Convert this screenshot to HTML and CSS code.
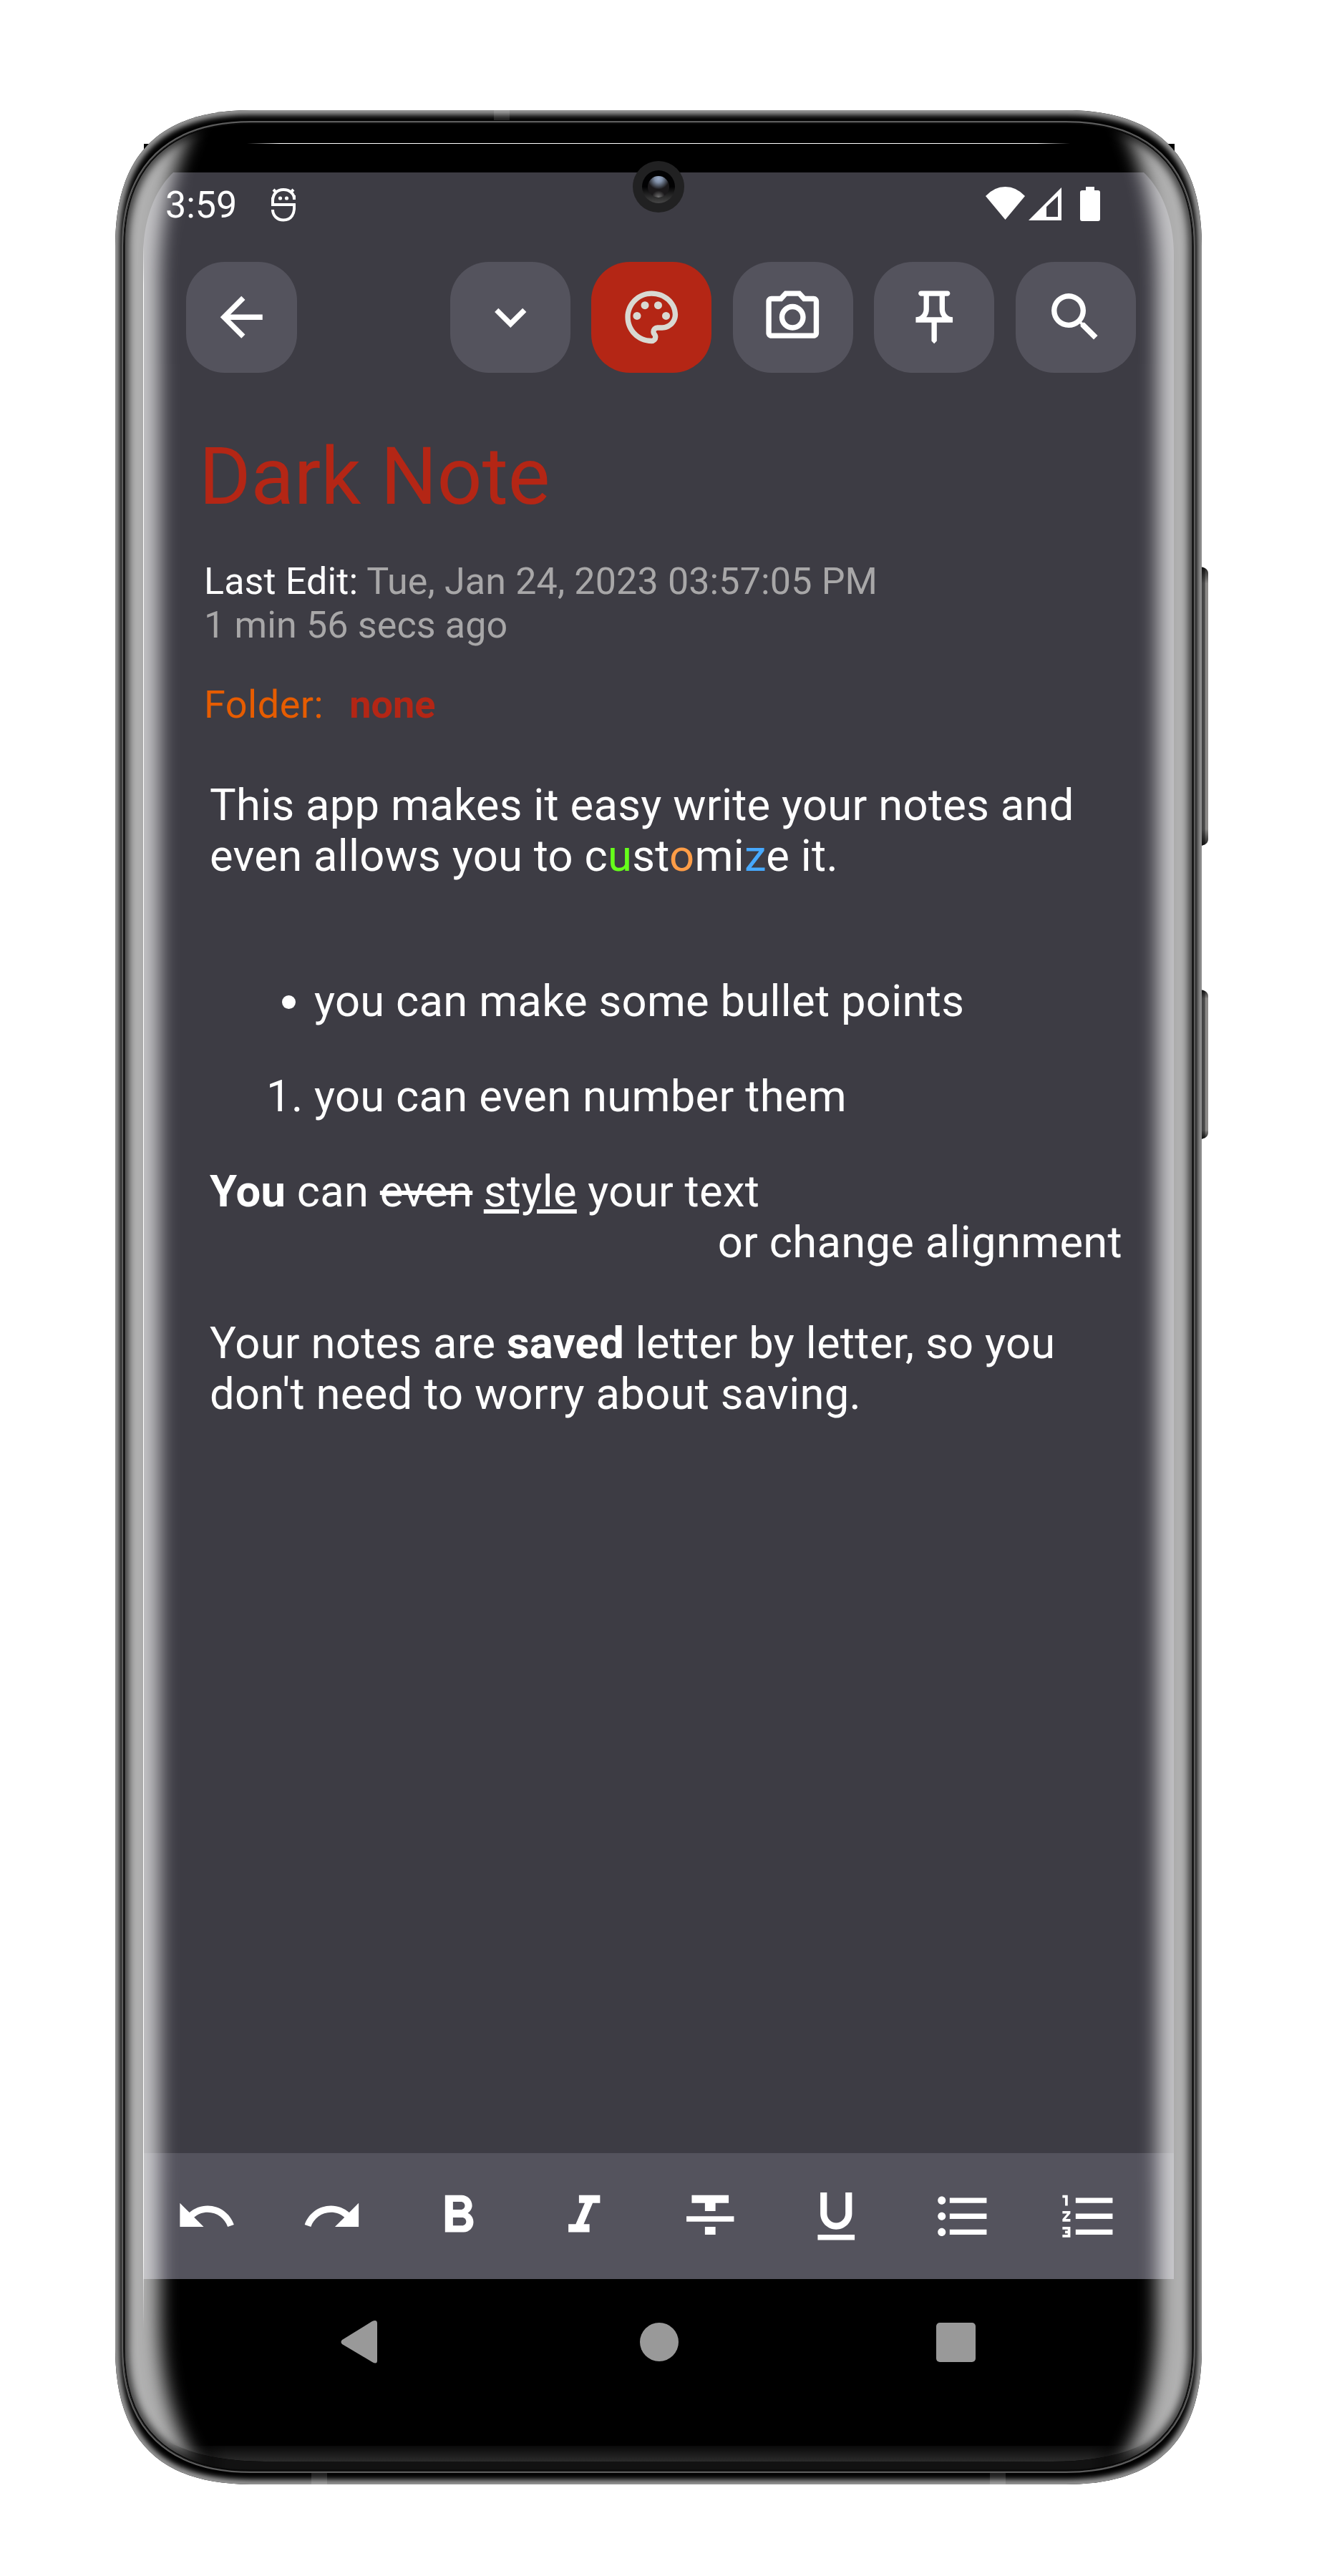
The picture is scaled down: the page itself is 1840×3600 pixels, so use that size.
FILE: index.html
```html
<!DOCTYPE html>
<html lang="en">
<head>
<meta charset="utf-8">
<title>Dark Note</title>
<link rel="stylesheet" href="styles.css">
</head>
<body>
<div class="device">
  <svg class="layer" viewBox="0 0 1840 3600" aria-hidden="true">
    <defs>
      <path id="outer" d="M161 344C161 216 223 154 351 154H1489C1617 154 1679 216 1679 344V3282C1679 3410 1617 3472 1489 3472H351C223 3472 161 3410 161 3282Z"/>
      <path id="inner" d="M173 344C173 232 237 172 351 172H1489C1603 172 1667 232 1667 344V3282C1667 3394 1603 3453 1489 3453H351C237 3453 173 3394 173 3282Z"/>
      <clipPath id="outerClip"><use href="#outer"/></clipPath>
      <linearGradient id="key" x1="0" x2="1" y1="0" y2="0">
        <stop offset="0" stop-color="#3c3c3c"/><stop offset=".6" stop-color="#4a4a4a"/>
        <stop offset=".68" stop-color="#8b8987"/><stop offset="1" stop-color="#8b8987"/>
      </linearGradient>
      <linearGradient id="keyShade" x1="0" x2="0" y1="0" y2="1">
        <stop offset="0" stop-color="#000" stop-opacity=".8"/><stop offset=".06" stop-color="#000" stop-opacity="0"/>
        <stop offset=".94" stop-color="#000" stop-opacity="0"/><stop offset="1" stop-color="#000" stop-opacity=".8"/>
      </linearGradient>
      <filter id="rimBlur" x="-5%" y="-5%" width="110%" height="110%"><feGaussianBlur stdDeviation="3.5"/></filter>
    </defs>
    <path d="M201 201h1440v60H201z"/>
    <path d="M1676 792q12 1 12 10v370q0 9-12 10z" fill="url(#key)"/>
    <path d="M1676 792q12 1 12 10v370q0 9-12 10z" fill="url(#keyShade)"/>
    <path d="M1676 1383q12 1 12 10v189q0 9-12 10z" fill="url(#key)"/>
    <path d="M1676 1383q12 1 12 10v189q0 9-12 10z" fill="url(#keyShade)"/>
    <use href="#outer" fill="#000"/>
    <g clip-path="url(#outerClip)">
      <use href="#outer" fill="none" stroke="#999" stroke-width="13" filter="url(#rimBlur)"/>
      <path d="M690 154h22v14h-22zM435 3455h22v17h-22zM1383 3455h22v17h-22z" fill="#fff" opacity=".12"/>
    </g>
    <use href="#inner" fill="#000" stroke="#5c5c5c" stroke-width="6"/>
    <use href="#inner" fill="#000" stroke="#0a0a0a" stroke-width="1.5"/>
  </svg>

  <main class="screen">
    <header class="status">
      <span class="clock">3:59</span>
      <svg class="debug" viewBox="0 0 34 48" fill="none" stroke="#fff" stroke-width="4">
        <path d="M2 19C2 9 8 3 17 3s15 6 15 13M0 16V24H32C33 37 28 45.500 17 45.500 8 45.500 2 39 2 31M3 3l5 5M31 3l-5 5"/>
        <path d="M2 14V22M32 11V17"/>
        <g fill="#fff" stroke="none"><circle cx="12.500" cy="15" r="2.600"/><circle cx="21.500" cy="15" r="2.600"/></g>
      </svg>
      <svg class="signals" viewBox="0 0 162 50" fill="#fff">
        <path d="M0 13Q12 0 27.500 0T55 13L27.500 46Z"/>
        <path fill-rule="evenodd" d="M60 47L106 1V47ZM85 42H101V13L85 28Z"/>
        <path d="M140 0h12v5h5q3 0 3 3v37q0 3-3 3h-22q-3 0-3-3V8q0-3 3-3h5z"/>
      </svg>
    </header>

    <nav class="actions">
      <span class="btn back"><svg class="ic" viewBox="0 0 24 24"><path d="M20 11H7.830l5.590-5.590L12 4l-8 8 8 8 1.410-1.410L7.830 13H20v-2z"/></svg></span>
      <span class="btn"><svg class="ic" viewBox="0 0 24 24"><path d="M16.590 8.590L12 13.170 7.410 8.590 6 10l6 6 6-6z"/></svg></span>
      <span class="btn accent"><svg class="ic" viewBox="0 0 24 24"><path d="M12 22C6.490 22 2 17.510 2 12S6.490 2 12 2s10 4.040 10 9c0 3.310-2.690 6-6 6h-1.770c-.28 0-.5.22-.5.5 0 .12.05.23.13.33.41.47.64 1.060.64 1.670A2.500 2.500 0 0 1 12 22zm0-18c-4.410 0-8 3.590-8 8s3.590 8 8 8c.28 0 .5-.22.5-.5a.54.54 0 0 0-.14-.35c-.41-.46-.63-1.050-.63-1.650a2.500 2.500 0 0 1 2.500-2.500H16c2.210 0 4-1.790 4-4 0-3.860-3.590-7-8-7z"/><circle cx="6.500" cy="11.500" r="1.500"/><circle cx="9.500" cy="7.500" r="1.500"/><circle cx="14.500" cy="7.500" r="1.500"/><circle cx="17.500" cy="11.500" r="1.500"/></svg></span>
      <span class="btn"><svg class="ic" viewBox="0 0 24 24"><path d="M14.120 4l1.830 2H20v12H4V6h4.050l1.830-2h4.240M15 2H9L7.170 4H4c-1.100 0-2 .9-2 2v12c0 1.100.9 2 2 2h16c1.100 0 2-.9 2-2V6c0-1.100-.9-2-2-2h-3.170L15 2zm-3 7c1.650 0 3 1.350 3 3s-1.350 3-3 3-3-1.350-3-3 1.350-3 3-3m0-2c-2.760 0-5 2.240-5 5s2.240 5 5 5 5-2.240 5-5-2.240-5-5-5z"/></svg></span>
      <span class="btn"><svg class="ic" viewBox="0 0 24 24"><path d="M14 4v5c0 1.120.37 2.160 1 3H9c.65-.86 1-1.900 1-3V4h4m3-2H7c-.55 0-1 .45-1 1s.45 1 1 1h1v5c0 1.660-1.340 3-3 3v2h5.970v7l1 1 1-1v-7H19v-2c-1.660 0-3-1.340-3-3V4h1c.55 0 1-.45 1-1s-.45-1-1-1z"/></svg></span>
      <span class="btn"><svg class="ic" viewBox="0 0 24 24"><path d="M15.500 14h-.79l-.28-.27A6.471 6.471 0 0 0 16 9.500 6.500 6.500 0 1 0 9.500 16c1.610 0 3.090-.59 4.230-1.570l.27.28v.79l5 4.990L20.490 19l-4.990-5zm-6 0C7.010 14 5 11.990 5 9.500S7.010 5 9.500 5 14 7.010 14 9.500 11.990 14 9.500 14z"/></svg></span>
    </nav>

    <section class="heading">
      <h1>Dark Note</h1>
      <p class="meta"><b>Last Edit:</b> Tue, Jan 24, 2023 03:57:05 PM<br>1 min 56 secs ago</p>
      <p class="folder"><span>Folder:</span><strong>none</strong></p>
    </section>

    <article class="note">
      <p>This app makes it easy write your notes and<br>even allows you to c<span class="green">u</span>st<span class="orange">o</span>mi<span class="blue">z</span>e it.</p>
      <p><br></p>
      <ul><li>you can make some bullet points</li></ul>
      <ol><li>you can even number them</li></ol>
      <p><b>You</b> can <s>even</s> <u>style</u> your text</p>
      <p class="right">or change alignment</p>
      <p><br></p>
      <p>Your notes are <b>saved</b> letter by letter, so you<br>don't need to worry about saving.</p>
    </article>

    <footer class="tools">
      <span><svg class="ic" viewBox="0 0 24 24"><path d="M12.500 8c-2.650 0-5.050.99-6.900 2.600L2 7v9h9l-3.620-3.620c1.390-1.160 3.160-1.880 5.120-1.880 3.540 0 6.550 2.310 7.600 5.500l2.370-.78C21.080 11.030 17.150 8 12.500 8z"/></svg></span>
      <span><svg class="ic" viewBox="0 0 24 24"><path d="M18.400 10.600C16.550 8.990 14.150 8 11.500 8c-4.650 0-8.580 3.030-9.960 7.220L3.900 16c1.050-3.190 4.050-5.500 7.600-5.500 1.950 0 3.730.72 5.120 1.880L13 16h9V7l-3.600 3.600z"/></svg></span>
      <span><svg class="ic" viewBox="0 0 24 24"><path d="M15.600 10.790c.97-.67 1.650-1.770 1.650-2.790 0-2.260-1.750-4-4-4H7v14h7.040c2.090 0 3.710-1.700 3.710-3.790 0-1.520-.86-2.820-2.150-3.420zM10 6.500h3c.83 0 1.500.67 1.500 1.500s-.67 1.500-1.500 1.500h-3v-3zm3.500 9H10v-3h3.500c.83 0 1.500.67 1.500 1.500s-.67 1.500-1.500 1.500z"/></svg></span>
      <span><svg class="ic" viewBox="0 0 24 24"><path d="M10 4v3h2.210l-3.420 8H6v3h8v-3h-2.210l3.420-8H18V4z"/></svg></span>
      <span><svg class="ic" viewBox="0 0 24 24"><path d="M10 19h4v-3h-4v3zM5 4v3h5v3h4V7h5V4H5zM3 14h18v-2H3v2z"/></svg></span>
      <span><svg class="ic" viewBox="0 0 24 24"><path d="M12 17c3.310 0 6-2.690 6-6V3h-2.500v8c0 1.930-1.570 3.500-3.500 3.500S8.500 12.930 8.500 11V3H6v8c0 3.310 2.690 6 6 6zm-7 2v2h14v-2H5z"/></svg></span>
      <span><svg class="ic" viewBox="0 0 24 24"><path d="M4 10.500c-.83 0-1.500.67-1.500 1.500s.67 1.500 1.500 1.500 1.500-.67 1.500-1.500-.67-1.500-1.500-1.500zm0-6c-.83 0-1.500.67-1.500 1.500S3.170 7.500 4 7.500 5.500 6.830 5.500 6 4.830 4.500 4 4.500zm0 12c-.83 0-1.500.68-1.500 1.500s.68 1.500 1.500 1.500 1.500-.68 1.500-1.500-.67-1.500-1.500-1.500zM7 19h14v-2H7v2zm0-6h14v-2H7v2zm0-8v2h14V5H7z"/></svg></span>
      <span><svg class="ic" viewBox="0 0 24 24"><path d="M2 17h2v.5H3v1h1v.5H2v1h3v-4H2v1zm1-9h1V4H2v1h1v3zm-1 3h1.800L2 13.100v.9h3v-1H3.200L5 10.900V10H2v1zm5-6v2h14V5H7zm0 14h14v-2H7v2zm0-6h14v-2H7v2z"/></svg></span>
    </footer>

    <div class="sysnav">
      <svg viewBox="0 0 52 60"><path d="M2 27L44 1q7-3 7 3v52q0 6-7 2L2 33q-3-3 0-6z" class="tri"/></svg>
      <i class="home"></i>
      <i class="recent"></i>
    </div>
  </main>

  <svg class="layer" viewBox="0 0 1840 3600" aria-hidden="true">
    <defs>
      <clipPath id="innerClip"><use href="#inner"/></clipPath>
      <filter id="soft" filterUnits="userSpaceOnUse" x="0" y="0" width="1840" height="3600"><feGaussianBlur stdDeviation="13"/></filter>
      <filter id="edgeSoft" filterUnits="userSpaceOnUse" x="0" y="0" width="1840" height="3600"><feGaussianBlur stdDeviation="6"/></filter>
      <mask id="glow" maskUnits="userSpaceOnUse" x="0" y="0" width="1840" height="3600">
        <path d="M0 0h1840v3600H0z" fill="#fff"/>
        <path d="M223 400C223 300 240 230 290 130H1550C1600 230 1617 300 1617 400V3230C1617 3320 1605 3390 1550 3470V3540H290V3470C235 3390 223 3320 223 3230Z" filter="url(#soft)"/>
      </mask>
      <linearGradient id="topLine" x1="345" x2="1495" y1="0" y2="0" gradientUnits="userSpaceOnUse">
        <stop offset="0" stop-color="#fff" stop-opacity="0"/><stop offset=".04" stop-color="#fff"/>
        <stop offset=".96" stop-color="#fff"/><stop offset="1" stop-color="#fff" stop-opacity="0"/>
      </linearGradient>
      <linearGradient id="sideLine" x1="0" x2="0" y1="340" y2="3255" gradientUnits="userSpaceOnUse">
        <stop offset="0" stop-color="#fff" stop-opacity="0"/><stop offset=".02" stop-color="#fff"/>
        <stop offset=".96" stop-color="#fff"/><stop offset="1" stop-color="#fff" stop-opacity="0"/>
      </linearGradient>
      <linearGradient id="floor" x1="0" x2="0" y1="0" y2="1">
        <stop offset="0" stop-color="#fff" stop-opacity="0"/><stop offset="1" stop-color="#fff" stop-opacity=".17"/>
      </linearGradient>
      <linearGradient id="fadeEnds" x1="235" x2="1605" y1="0" y2="0" gradientUnits="userSpaceOnUse">
        <stop offset="0" stop-color="#000"/><stop offset=".06" stop-color="#fff"/>
        <stop offset=".94" stop-color="#fff"/><stop offset="1" stop-color="#000"/>
      </linearGradient>
      <mask id="ends" maskUnits="userSpaceOnUse" x="0" y="3380" width="1840" height="100">
        <path d="M235 3380h1370v100H235z" fill="url(#fadeEnds)"/>
      </mask>
      <radialGradient id="lens" cx=".5" cy=".12" r=".5">
        <stop offset="0" stop-color="#9aabc6"/><stop offset=".35" stop-color="#8190a8"/><stop offset="1" stop-color="#1b191b"/>
      </radialGradient>
      <radialGradient id="lensLow" cx=".5" cy="1" r=".32">
        <stop offset="0" stop-color="#777"/><stop offset="1" stop-color="#777" stop-opacity="0"/>
      </radialGradient>
      <linearGradient id="barrel" x1="0" x2="0" y1="0" y2="1">
        <stop offset=".5" stop-color="#020203"/><stop offset="1" stop-color="#464646"/>
      </linearGradient>
    </defs>
    <g clip-path="url(#innerClip)">
      <path d="M0 0h1840v3600H0z" fill="#fff" opacity=".69" mask="url(#glow)"/>
      <use href="#inner" fill="none" stroke="#000" stroke-width="12" opacity=".8" filter="url(#edgeSoft)"/>
      <g mask="url(#ends)">
        <path d="M235 3418h1370v-6q-50 28-135 28H370q-85 0-135-28z" fill="url(#floor)"/>
        <path d="M235 3412q50 28 135 28h1100q85 0 135-28v60H235z" fill="#121212"/>
      </g>
      <use href="#inner" fill="none" stroke="#080808" stroke-width="3"/>
    </g>
    <path d="M345 200h1150v1H345z" fill="url(#topLine)"/>
    <path d="M200 340h1v2915h-1z" fill="url(#sideLine)"/>
    <circle cx="920" cy="261" r="36" fill="#212122"/>
    <circle cx="920" cy="261" r="23" fill="url(#barrel)"/>
    <circle cx="920" cy="261" r="15" fill="url(#lens)"/>
    <circle cx="920" cy="261" r="15" fill="url(#lensLow)"/>
  </svg>
</div>
</body>
</html>
```
FILE: styles.css
```css
* { box-sizing: border-box; }
body { margin: 0; background: #fff; font-family: Roboto, "Liberation Sans", sans-serif; color: #fff; }
h1, p, ul, ol { margin: 0; padding: 0; font-weight: 400; }

.device { position: relative; width: 1840px; height: 3600px; padding: 241px 200px 0; overflow: hidden; }
.layer { position: absolute; left: 0; top: 0; width: 1840px; height: 3600px; }

.screen {
  position: relative;
  display: flex;
  flex-direction: column;
  width: 1440px;
  height: 3120px;
  background: #3d3c44;
  clip-path: path("M0 115C0 70 14 27 42 0H1398C1426 27 1440 70 1440 115V3199H0Z");
}

.status { display: flex; align-items: flex-start; height: 125px; padding: 15px 101px 0 31px; }
.clock { width: 148px; font-size: 52px; line-height: 61px; }
.debug { width: 34px; height: 48px; margin-top: 6px; }
.signals { width: 162px; height: 50px; margin: 5px 0 0 auto; }

.actions { display: flex; gap: 29.400px; height: 154.500px; padding: 0 53.500px 0 60px; }
.btn { display: flex; align-items: center; justify-content: center; width: 168px; border-radius: 54px; background: #54535d; }
.btn.back { width: 154.500px; margin-right: auto; }
.btn.accent { background: #b42615; }
.ic { display: block; width: 88.500px; height: 88.500px; fill: #fff; }
.accent .ic { fill: #d9d9d2; }

.heading { padding: 80px 0 0 85px; }
h1 { margin-left: -7px; font-size: 110.600px; line-height: 131px; color: #b42615; }
.meta { margin-top: 50px; font-size: 52px; line-height: 61.500px; letter-spacing: 0.150px; color: #a8a7a8; }
.meta b { font-weight: 400; color: #fff; }
.folder { display: flex; gap: 36px; margin-top: 48px; font-size: 54px; line-height: 63px; letter-spacing: 0.500px; color: #e65c00; }
.folder strong { font-weight: 700; letter-spacing: 0; color: #b42615; }

.note { flex: 1; margin-top: 74.500px; padding: 0 72px 0 93px; font-size: 61.500px; line-height: 70.600px; letter-spacing: 0.300px; }
.note ul, .note ol { margin: 62.500px 0; padding-left: 146px; }
.note ul + ol { margin-top: 0; }
.green { color: #66ff1a; }
.orange { color: #ff9d47; }
.blue { color: #47a9ff; }
.right { text-align: right; }

.tools { display: flex; height: 176px; padding-right: 31px; background: #54535d; }
.tools span { flex: 1; display: flex; align-items: center; justify-content: center; }

.sysnav { display: flex; align-items: center; height: 176px; padding: 0 77px 0 276px; background: #000; }
.sysnav svg { width: 52px; height: 60px; }
.tri { fill: #999; }
.home { width: 54px; height: 54px; margin-left: 366px; border-radius: 50%; background: #999; }
.recent { width: 55px; height: 55px; margin-left: 360px; border-radius: 5px; background: #999; }
```
